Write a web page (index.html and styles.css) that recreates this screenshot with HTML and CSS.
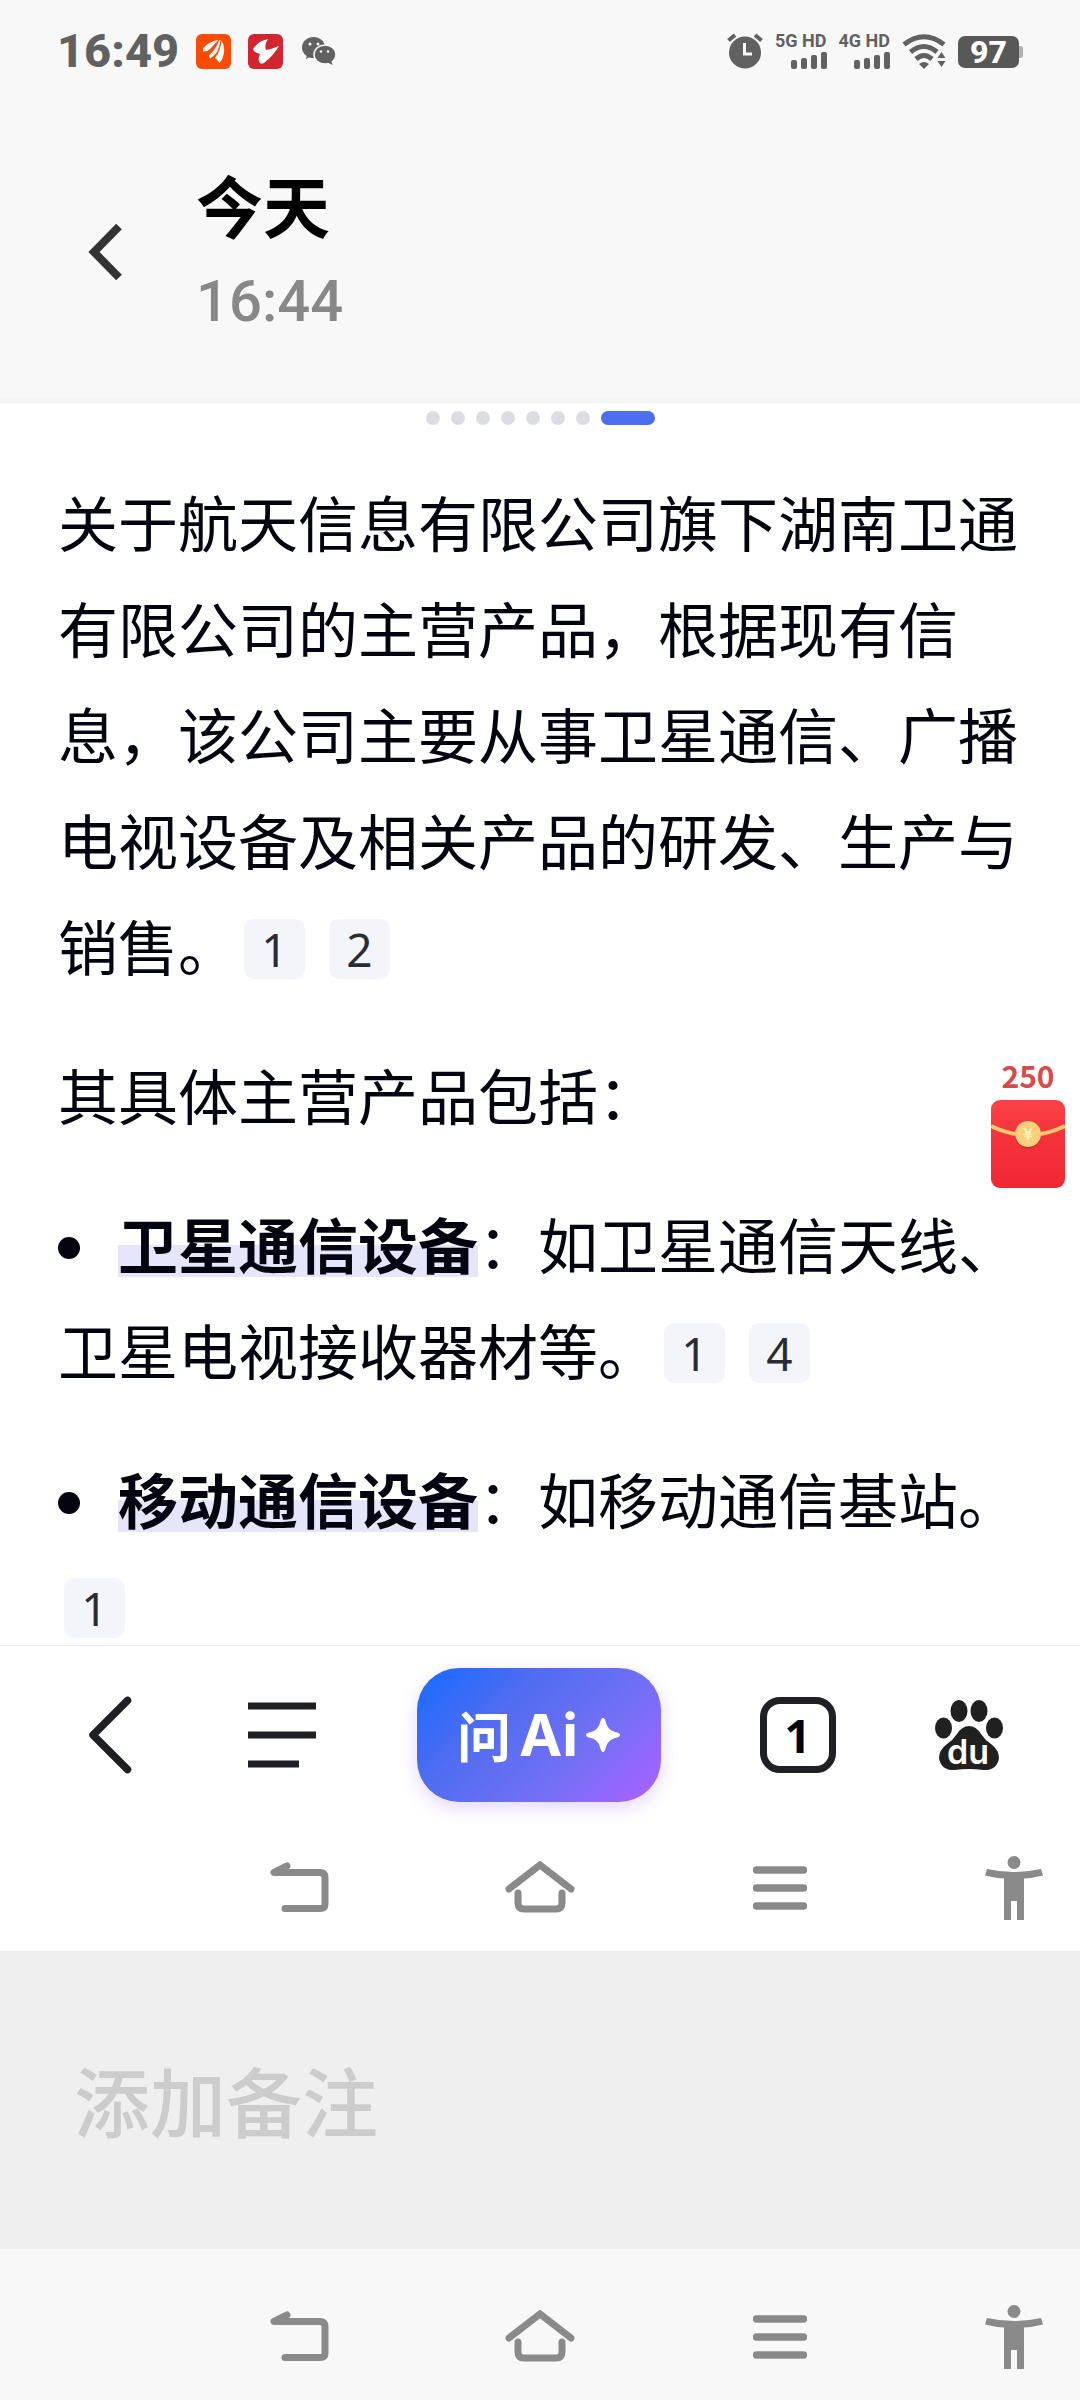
FILE: index.html
```html
<!DOCTYPE html>
<html lang="zh-CN">
<head>
<meta charset="utf-8">
<meta name="viewport" content="width=device-width, initial-scale=1">
<title>今天 16:44</title>
<link rel="stylesheet" href="styles.css">
</head>
<body>
<svg class="sprite" width="0" height="0" aria-hidden="true">
  <symbol id="nav-back" viewBox="0 0 60 54"><path d="M17 5 4 11.500H50Q55 11.500 55 16.500V43Q55 47.500 50 47.500H15" fill="none" stroke="#8a8a8a" stroke-width="7" stroke-linecap="round" stroke-linejoin="round"/></symbol>
  <symbol id="nav-home" viewBox="0 0 72 54"><path d="M5 28 36 4 67 28M14 32V42Q14 48 20 48H52Q58 48 58 42V32" fill="none" stroke="#8a8a8a" stroke-width="7" stroke-linecap="round" stroke-linejoin="miter"/></symbol>
  <symbol id="nav-recents" viewBox="0 0 54 44"><path d="M3.500 4H50.500M3.500 22H50.500M3.500 40H50.500" stroke="#8a8a8a" stroke-width="7.500" stroke-linecap="round"/></symbol>
  <symbol id="nav-access" viewBox="0 0 58 64"><g fill="#8a8a8a"><circle cx="29" cy="6.500" r="6.500"/><path d="M2 13Q29 19 56 13L58 19.500Q48 22 39 22.500V64H32V45H26V64H19V22.500Q10 22 0 19.500Z"/></g></symbol>
</svg>

<div class="status-bar">
  <time class="status-time">16:49</time>
  <svg class="app-icon" width="35" height="35" viewBox="0 0 35 35"><rect width="35" height="35" rx="6" fill="#ff4a05"/><path d="M7 14.500Q13 7 22 6Q17 12 14 15Q11 18 7 17.500ZM13 21.500Q20 15 23 6.500L24.500 6Q24 12 21 18Q18 22 14 24.500ZM19 24Q25 16 25.500 6.500Q29 13 28 19Q27 25 23.500 29Q22 26 19 24Z" fill="#fff"/></svg>
  <svg class="app-icon" width="35" height="35" viewBox="0 0 35 35"><rect width="35" height="35" rx="6" fill="#d4252f"/><path d="M5 15Q10 7 20 5Q16 11 18 16Q24 15 31 12Q26 21 16 29Q13 31 11 28Q10 24 12 20Q6 19 5 15Z" fill="#fff"/></svg>
  <svg class="wechat" width="34" height="28" viewBox="0 0 34 28"><g fill="#616161"><ellipse cx="11.500" cy="10.500" rx="11.500" ry="10.500"/><path d="M5 18 4 22 10 19Z"/><ellipse cx="23" cy="17.500" rx="11" ry="9.500" stroke="#f8f8f8" stroke-width="1.500"/><path d="M25 25 30.500 28 29 23Z"/></g><g fill="#f8f8f8"><circle cx="8" cy="7" r="1.500"/><circle cx="16" cy="7" r="1.500"/><circle cx="19" cy="14.500" r="1.300"/><circle cx="26" cy="14.500" r="1.300"/></g></svg>
  <div class="status-right">
    <svg width="36" height="36" viewBox="0 0 36 36"><circle cx="18" cy="19.500" r="16" fill="#616161"/><path d="M1.500 7.500 8 2M34.500 7.500 28 2" stroke="#616161" stroke-width="4"/><path d="M17.500 10V21H25" fill="none" stroke="#f8f8f8" stroke-width="3"/></svg>
    <div class="signal"><span>5G HD</span><svg width="36" height="17" viewBox="0 0 36 17"><g fill="#616161"><rect y="8" width="6" height="9" rx="2"/><rect x="10" y="6" width="6" height="11" rx="2"/><rect x="20" y="3" width="6" height="14" rx="2"/><rect x="30" width="6" height="17" rx="2"/></g></svg></div>
    <div class="signal"><span>4G HD</span><svg width="36" height="17" viewBox="0 0 36 17"><g fill="#616161"><rect y="8" width="6" height="9" rx="2"/><rect x="10" y="6" width="6" height="11" rx="2"/><rect x="20" y="3" width="6" height="14" rx="2"/><rect x="30" width="6" height="17" rx="2"/></g></svg></div>
    <svg width="44" height="35" viewBox="0 0 44 35"><g fill="none" stroke="#616161" stroke-width="5"><path d="M2 10.500Q22-5 42 10.500"/><path d="M8.500 18Q22 7 35 18"/><path d="M14 25Q22 18 30 25"/></g><path d="M17 30Q22 26 27 30L22 35Z" fill="#616161"/><path d="M39.500 14 46 25V35H33V25Z" fill="#f8f8f8"/><path d="M35.500 24 39.500 18 43.500 24ZM35.500 27H43.500L39.500 33Z" fill="#616161"/></svg>
    <div class="battery"><span>97</span></div>
  </div>
</div>

<header class="header">
  <button class="icon-button header-back" aria-label="返回"><svg width="36" height="58" viewBox="0 0 36 58"><path d="M31 3.500 6 29 31 54.500" fill="none" stroke="#333" stroke-width="8"/></svg></button>
  <div>
    <h1 class="title">今天</h1>
    <time class="subtitle">16:44</time>
  </div>
</header>

<main class="shot">
  <div class="pager"><i></i><i></i><i></i><i></i><i></i><i></i><i></i><i class="active"></i></div>
  <article class="article">
    <p>关于航天信息有限公司旗下湖南卫通有限公司的主营产品，根据现有信息，该公司主要从事卫星通信、广播电视设备及相关产品的研发、生产与销售。<a class="ref" href="#r1">1</a><a class="ref" href="#r2">2</a></p>
    <p>其具体主营产品包括：</p>
    <ul>
      <li><strong>卫星通信设备</strong>：如卫星通信天线、卫星电视接收器材等。<a class="ref" href="#r1">1</a><a class="ref" href="#r4">4</a></li>
      <li><strong>移动通信设备</strong>：如移动通信基站。<a class="ref" href="#r1">1</a></li>
    </ul>
    <a class="packet" href="#packet">
      <span>250</span>
      <svg width="74" height="88" viewBox="0 0 74 88">
        <defs><linearGradient id="red" x2="0" y2="1"><stop stop-color="#fb4348"/><stop offset="0.400" stop-color="#f5323b"/><stop offset="1" stop-color="#f12733"/></linearGradient></defs>
        <rect width="74" height="88" rx="9" fill="url(#red)"/>
        <path d="M0 26Q37 44 74 26" fill="none" stroke="#fdc66b" stroke-width="4"/>
        <circle cx="37" cy="35" r="13" fill="#b9222b"/><circle cx="37" cy="34" r="13" fill="#fbd07c"/>
        <text x="37" y="40" text-anchor="middle" class="coin-text">¥</text>
      </svg>
    </a>
  </article>

  <div class="toolbar">
    <button class="icon-button browser-back" aria-label="后退"><svg width="44" height="78" viewBox="0 0 44 78"><path d="M39.500 4.500 5 39 39.500 73.500" fill="none" stroke="#1f2024" stroke-width="7.500" stroke-linecap="round" stroke-linejoin="round"/></svg></button>
    <button class="icon-button" aria-label="菜单"><svg width="70" height="66" viewBox="0 0 70 66"><path d="M1 4H69M1 33H69M1 62H52" stroke="#1f2024" stroke-width="7"/></svg></button>
    <button class="ask"><span class="ask-cn">问</span><span class="ask-ai">Ai</span><svg width="34" height="34" viewBox="0 0 34 34"><path d="M17 0Q19 0 20 5Q22 12 29 14Q34 15 34 17Q34 19 29 20Q22 22 20 29Q19 34 17 34Q15 34 14 29Q12 22 5 20Q0 19 0 17Q0 15 5 14Q12 12 14 5Q15 0 17 0Z" fill="#fff"/></svg></button>
    <button class="tabs">1</button>
    <button class="icon-button" aria-label="百度"><svg width="68" height="72" viewBox="0 0 68 72"><g fill="#202020"><ellipse cx="8.500" cy="29" rx="8.500" ry="10.500"/><ellipse cx="24" cy="12" rx="8.500" ry="11"/><ellipse cx="44" cy="12" rx="8.500" ry="11"/><ellipse cx="59.500" cy="29" rx="8.500" ry="10.500"/><path d="M34 27Q41 27 46 35Q50 41 56 45Q64 51 64 59Q62 72 48 71Q34 69 20 71Q6 72 4 59Q4 51 12 45Q18 41 22 35Q27 27 34 27Z"/></g><text x="33" y="65" text-anchor="middle" class="du-text">du</text></svg></button>
  </div>

  <div class="nav">
    <svg class="nav-back" width="60" height="54"><use href="#nav-back"/></svg>
    <svg width="72" height="54"><use href="#nav-home"/></svg>
    <svg width="54" height="44"><use href="#nav-recents"/></svg>
    <svg class="nav-access" width="58" height="64"><use href="#nav-access"/></svg>
  </div>
</main>

<textarea class="note" aria-label="添加备注" placeholder="添加备注"></textarea>

<nav class="nav nav-system">
  <button class="icon-button nav-back" aria-label="返回"><svg width="60" height="54"><use href="#nav-back"/></svg></button>
  <button class="icon-button" aria-label="主页"><svg width="72" height="54"><use href="#nav-home"/></svg></button>
  <button class="icon-button" aria-label="最近任务"><svg width="54" height="44"><use href="#nav-recents"/></svg></button>
  <button class="icon-button nav-access" aria-label="无障碍"><svg width="58" height="64"><use href="#nav-access"/></svg></button>
</nav>
</body>
</html>
```
FILE: styles.css
```css
* { box-sizing: border-box; }

body {
  margin: 0;
  min-height: 100vh;
  display: flex;
  flex-direction: column;
  background: #f8f8f8;
  color: #02040f;
  font-family: "Noto Sans CJK SC", sans-serif;
}

svg { display: block; flex: none; }
.sprite { position: absolute; }

button {
  border: 0;
  padding: 0;
  background: none;
  color: inherit;
  font: inherit;
  cursor: pointer;
}

.icon-button { display: flex; align-items: center; }

/* Status bar */
.status-bar {
  height: 102px;
  padding: 0 57px;
  display: flex;
  align-items: center;
  color: #616161;
  font-family: Roboto, sans-serif;
}
.status-time { font-size: 47px; font-weight: 800; line-height: 56px; }
.app-icon { margin-left: 17px; }
.wechat { margin-left: 19px; }
.status-right { margin-left: auto; display: flex; align-items: center; gap: 12px; }
.signal { display: flex; flex-direction: column; align-items: flex-end; gap: 4px; }
.signal span { font-size: 18px; font-weight: 700; line-height: 14px; }
.battery {
  display: flex;
  align-items: center;
  height: 32px;
  margin-top: 2px;
}
.battery span {
  width: 61px;
  border-radius: 7px;
  background: #585858;
  color: #fff;
  font-size: 32px;
  font-weight: 800;
  line-height: 32px;
  text-align: center;
}
.battery::after {
  content: "";
  width: 4px;
  height: 12px;
  border-radius: 0 3px 3px 0;
  background: #b0b0b0;
}

/* Header */
.header {
  height: 301px;
  padding: 61px 88px 0;
  display: flex;
  align-items: flex-start;
  gap: 72px;
  border-bottom: 6px solid #f4f4f4;
}
.header-back { padding-top: 60px; }
.title { margin: 0; color: #000; font-size: 67px; font-weight: 700; line-height: 82px; }
.subtitle {
  display: block;
  margin-top: 15px;
  color: #888;
  font-family: Roboto, sans-serif;
  font-size: 58px;
  font-weight: 500;
  line-height: 82px;
}

/* Shared page */
.shot { background: #fff; }
.pager { display: flex; justify-content: center; gap: 11px; padding: 8px 0; }
.pager i { width: 14px; height: 14px; border-radius: 7px; background: #dcdde1; }
.pager .active { width: 54px; background: #4e6ef2; }

.article {
  position: relative;
  margin-bottom: -12px;
  padding: 35px 58px 0;
  font-size: 60px;
  line-height: 106px;
}
.article p, .article ul { margin: 0 0 43px; padding: 0; }
.article ul { margin: 0; list-style: none; }
.article li + li { margin-top: 43px; }
.article li::before {
  content: "";
  display: inline-block;
  width: 22px;
  height: 22px;
  margin-right: 38px;
  border-radius: 11px;
  background: #02040f;
  vertical-align: 10px;
}
.article strong {
  font-weight: 700;
  background: linear-gradient(#e6e6fb, #e6e6fb) 0 46px / 100% 32px no-repeat;
}
.ref {
  display: inline-block;
  min-width: 61px;
  margin: 0 18px 0 6px;
  border-radius: 10px;
  background: #f4f5fa;
  color: #2b2c33;
  font-family: "Noto Sans", sans-serif;
  font-size: 46px;
  line-height: 60px;
  text-align: center;
  text-decoration: none;
  vertical-align: 4px;
}

.packet {
  position: absolute;
  top: 624px;
  right: 15px;
  display: flex;
  flex-direction: column;
  align-items: center;
  gap: 7px;
  color: #d94a4c;
  font-size: 30px;
  font-weight: 700;
  line-height: 36px;
  text-decoration: none;
}
.coin-text { fill: #fff3b8; font-size: 17px; font-weight: 700; }

/* Browser toolbar */
.toolbar {
  position: relative;
  height: 180px;
  padding: 0 77px 2px 88px;
  display: flex;
  align-items: center;
  justify-content: space-between;
  background: #fff;
  border-top: 1px solid #eaeaea;
}
.browser-back { width: 60px; }
.ask {
  width: 244px;
  height: 134px;
  display: flex;
  align-items: center;
  justify-content: center;
  gap: 8px;
  border-radius: 42px;
  background: linear-gradient(135deg, #1f6bff 6%, #4f6cf0 32%, #7570f6 68%, #a462ff 94%);
  box-shadow: 0 6px 18px rgba(150, 100, 255, 0.25);
  color: #fff;
  font-weight: 700;
}
.ask-cn { font-size: 54px; line-height: 60px; }
.ask-ai { font-family: Inter, sans-serif; font-size: 58px; line-height: 60px; }
.tabs {
  width: 76px;
  height: 76px;
  border: 7px solid #1f2024;
  border-radius: 20px;
  font-family: "Noto Sans", sans-serif;
  font-size: 46px;
  font-weight: 700;
  line-height: 60px;
}
.du-text { fill: #fff; font-family: Inter, sans-serif; font-size: 34px; font-weight: 600; }

/* Navigation rows */
.nav {
  height: 126px;
  display: grid;
  grid-template-columns: 3fr 4fr 4fr 4fr 3fr;
  align-items: center;
  justify-items: center;
}
.nav-back { grid-column: 2; }
.nav-access { justify-self: end; margin-right: 37px; }
.nav-system { height: 151px; padding-top: 25px; }

/* Note field */
.note {
  flex: 1 0 298px;
  width: 100%;
  padding: 92px 74px;
  border: 0;
  resize: none;
  outline: 0;
  background: #efefef;
  color: #333;
  font: 500 76px/112px "Noto Sans CJK SC", sans-serif;
}
.note::placeholder { color: #ccc; opacity: 1; }
```
